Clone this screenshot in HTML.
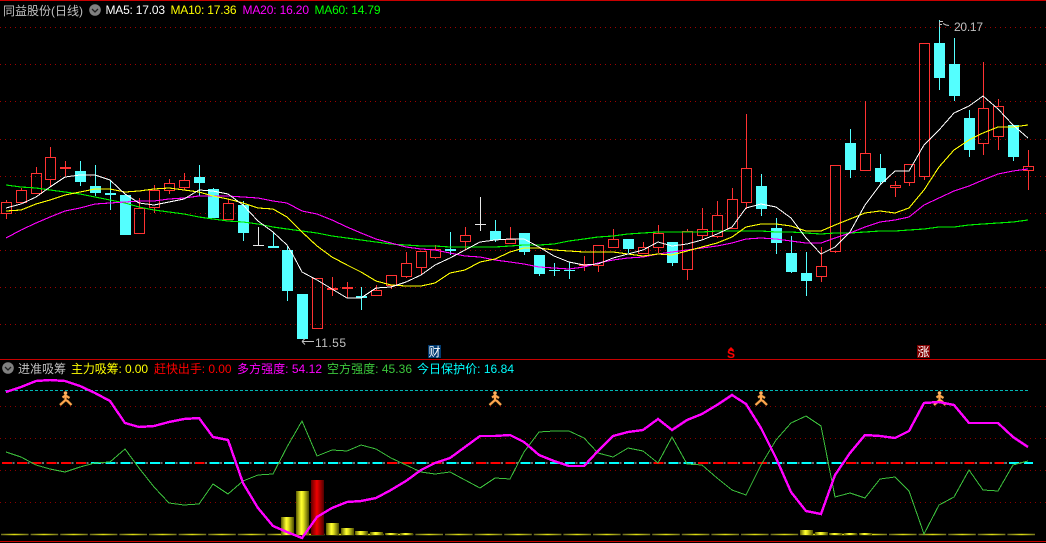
<!DOCTYPE html>
<html lang="zh"><head><meta charset="utf-8"><title>同益股份</title>
<style>
html,body{margin:0;padding:0;background:#000;width:1046px;height:543px;overflow:hidden}
svg{display:block}
text{font-family:"Liberation Sans","WenQuanYi Zen Hei","Noto Sans CJK SC",sans-serif;font-size:12px}
</style></head><body>
<svg width="1046" height="543" viewBox="0 0 1046 543" xmlns="http://www.w3.org/2000/svg">
<defs>
<linearGradient id="g" x1="0" x2="1" y1="0" y2="0"><stop offset="0" stop-color="#5a5a00"/><stop offset=".4" stop-color="#ffff30"/><stop offset=".55" stop-color="#e8e820"/><stop offset="1" stop-color="#4a4a00"/></linearGradient>
<linearGradient id="r" x1="0" x2="1" y1="0" y2="0"><stop offset="0" stop-color="#600000"/><stop offset=".45" stop-color="#f00000"/><stop offset="1" stop-color="#500000"/></linearGradient>
<linearGradient id="y" gradientUnits="userSpaceOnUse" x1="1" x2="30.62" y1="0" y2="0" spreadMethod="repeat"><stop offset="0" stop-color="#6a6a20"/><stop offset=".45" stop-color="#dcdc10"/><stop offset=".95" stop-color="#6a6a20"/><stop offset="1" stop-color="#6a6a20"/></linearGradient>
<clipPath id="rc"><rect x="0" y="460" width="87" height="8"/><rect x="195" y="460" width="10" height="8"/><rect x="386" y="460" width="27" height="8"/><rect x="431" y="460" width="12" height="8"/><rect x="475" y="460" width="42" height="8"/><rect x="653" y="460" width="11" height="8"/><rect x="696" y="460" width="71" height="8"/><rect x="845" y="460" width="159" height="8"/></clipPath>
<g id="run"><path d="M0-4 0 1-5.5 6M0 1 2 2 6 6M-3-1.5 0-3.5 4-1" fill="none" stroke="#7a4a10" stroke-width="3" stroke-opacity=".7"/><path d="M0-4 0 1-5.5 6M0 1 2 2 6 6M-3-1.5 0-3.5 4-1" fill="none" stroke="#ffa850" stroke-width="2"/><circle cx="0" cy="-6" r="1.8" fill="#ffb060"/></g>
</defs>
<rect width="1046" height="543" fill="#000"/>
<g shape-rendering="crispEdges" fill="none">
<path d="M0 .5H1046M0 359.5H1046M0 541.5H1046" stroke="#c80000"/>
<path d="M0 27.5H1046M0 64.5H1046M0 101.5H1046M0 139.5H1046M0 176.5H1046M0 213.5H1046M0 250.5H1046M0 287.5H1046M0 324.5H1046" stroke="#a00000" stroke-dasharray="1 4"/>
<path d="M0 406.5H1046M0 438.5H1046M0 470.5H1046M0 502.5H1046" stroke="#8a0000" stroke-dasharray="1 4"/>
<path d="M5 390.5H1028" stroke="#00b8b8" stroke-dasharray="3 2"/>

<path stroke="#ff3232" d="M6.5 200V202M6.5 213V219M1.5 202.5h10V213.5h-10z
M21.5 188V190M16.5 190.5h10V202.5h-10z
M36.5 167V173M31.5 173.5h10V193.5h-10z
M50.5 147V157M50.5 179V186M45.5 157.5h10V179.5h-10z
M139.5 198V208M134.5 208.5h10V233.5h-10z
M154.5 185V190M154.5 207V213M149.5 190.5h10V207.5h-10z
M169.5 179V183M169.5 190V194M164.5 183.5h10V190.5h-10z
M184.5 173V180M184.5 187V190M179.5 180.5h10V187.5h-10z
M228.5 199V203M223.5 203.5h10V219.5h-10z
M312.5 278.5h10V328.5h-10z
M376.5 285V290M371.5 290.5h10V295.5h-10z
M391.5 285V289M386.5 275.5h10V285.5h-10z
M406.5 252V263M406.5 276V278M401.5 263.5h10V276.5h-10z
M421.5 267V274M416.5 251.5h10V267.5h-10z
M435.5 245V249M435.5 257V259M430.5 249.5h10V257.5h-10z
M465.5 227V235M465.5 241V250M460.5 235.5h10V241.5h-10z
M510.5 227V239M505.5 239.5h10V243.5h-10z
M598.5 265V272M593.5 245.5h10V265.5h-10z
M613.5 229V239M608.5 239.5h10V247.5h-10z
M643.5 242V247M638.5 247.5h10V253.5h-10z
M658.5 225V233M658.5 247V253M653.5 233.5h10V247.5h-10z
M687.5 229V231M687.5 269V280M682.5 231.5h10V269.5h-10z
M702.5 208V229M702.5 235V240M697.5 229.5h10V235.5h-10z
M717.5 201V215M717.5 236V238M712.5 215.5h10V236.5h-10z
M732.5 188V199M727.5 199.5h10V228.5h-10z
M746.5 114V168M746.5 202V209M741.5 168.5h10V202.5h-10z
M821.5 247V266M821.5 276V282M816.5 266.5h10V276.5h-10z
M835.5 251V253M830.5 165.5h10V251.5h-10z
M865.5 101V153M860.5 153.5h10V170.5h-10z
M895.5 181V185M895.5 187V197M890.5 185.5h10V187.5h-10z
M909.5 182V186M904.5 164.5h10V182.5h-10z
M924.5 176V180M919.5 43.5h10V176.5h-10z
M983.5 62V108M983.5 143V155M978.5 108.5h10V143.5h-10z
M998.5 99V106M998.5 136V150M993.5 106.5h10V136.5h-10z
M1028.5 150V166M1028.5 170V190M1023.5 166.5h10V170.5h-10z
M65.5 161V176M332.5 277V296M347.5 282V298M584.5 256V271"/>
<path stroke="#ff3232" stroke-width="2" d="M60 168H71M327 289H338M342 288H353M579 265H590"/>

<path stroke="#54ffff" d="M80.5 161V186M95.5 165V196M110.5 180V210M199.5 165V196M213.5 188V189M243.5 201V241M273.5 233V248M287.5 246V301M361.5 287V310M450.5 232V255M495.5 220V242M524.5 233V255M539.5 255V276M554.5 263V276M569.5 262V279M628.5 239V253M672.5 242V266M761.5 174V216M776.5 218V254M791.5 236V273M806.5 252V296M850.5 129V178M880.5 154V184M939.5 20V90M954.5 38V101M969.5 110V157M1013.5 125V161M549 270.5H560M564 270.5H575"/>
<path stroke="#54ffff" stroke-width="2" d="M105 194H116M268 247H279M356 297H367M445 250H456"/>
<path fill="#54ffff" d="M75 171h11V182H75zM90 186h11V193H90zM120 195h11V235H120zM194 177h11V183H194zM208 189h11V218H208zM238 205h11V233H238zM282 250h11V291H282zM297 294h11V339H297zM490 231h11V240H490zM519 233h11V252H519zM534 255h11V274H534zM623 239h11V249H623zM667 242h11V263H667zM756 186h11V209H756zM771 228h11V243H771zM786 253h11V272H786zM801 273h11V281H801zM845 143h11V170H845zM875 168h11V182H875zM934 43h11V78H934zM949 64h11V96H949zM964 118h11V150H964zM1008 125h11V157H1008z"/>
<path stroke="#e8e8e8" d="M258.5 227V246M253 245.5H264M480.5 197V231M475 224.5H486"/>

<polyline stroke="#00f000" stroke-width="1.15" points="6,185 21,187 36,188 50,190 65,192 80,194 95,197 110,200 125,203 139,207 154,210 169,212 184,214 199,217 213,219 228,221 243,222 258,224 273,227 287,229 302,231 317,233 332,236 347,238 361,240 376,242 391,244 406,245 421,246 435,246 450,247 465,247 480,247 495,247 510,246 524,245 539,245 554,244 569,241 584,239 598,237 613,236 628,234 643,233 658,232 672,232 687,232 702,232 717,231 732,231 746,231 761,231 776,232 791,232 806,233 821,234 835,233 850,233 865,232 880,231 895,231 909,230 924,229 939,227 954,227 969,225 983,224 998,223 1013,222 1028,220"/>
<polyline stroke="#ff00ff" stroke-width="1.1" points="6,238 21,230 36,223 50,217 65,211 80,208 95,204 110,203 125,202 139,201 154,201 169,199 184,198 199,196 213,196 228,196 243,197 258,198 273,201 287,203 302,211 317,214 332,220 347,227 361,233 376,239 391,243 406,247 421,249 435,250 450,253 465,256 480,257 495,260 510,262 524,264 539,267 554,268 569,269 584,267 598,263 613,260 628,258 643,257 658,254 672,252 687,250 702,248 717,246 732,243 746,239 761,238 776,239 791,241 806,243 821,243 835,238 850,233 865,227 880,222 895,220 909,217 924,205 939,198 954,191 969,186 983,180 998,174 1013,171 1028,169"/>
<polyline stroke="#ffff00" stroke-width="1.1" points="6,211 21,210 36,204 50,200 65,195 80,192 95,189 110,189 125,192 139,191 154,189 169,188 184,190 199,192 213,196 228,199 243,203 258,208 273,209 287,217 302,232 317,246 332,257 347,265 361,272 376,281 391,285 406,286 421,286 435,283 450,273 465,270 480,262 495,259 510,252 524,248 539,248 554,250 569,251 584,252 598,252 613,252 628,254 643,256 658,254 672,255 687,251 702,247 717,243 732,237 746,227 761,224 776,224 791,226 806,231 821,231 835,225 850,219 865,213 880,211 895,213 909,208 924,190 939,167 954,150 969,140 983,133 998,127 1013,127 1028,125"/>
<polyline stroke="#ffffff" stroke-width="1" points="6,208 21,204 36,197 50,187 65,177 80,175 95,175 110,180 125,194 139,203 154,205 169,202 184,199 199,190 213,191 228,194 243,205 258,221 273,232 287,245 293,255 302,272 317,280 332,289 347,298 361,298 376,288 391,287 406,282 421,275 435,265 450,258 465,250 480,242 495,240 510,239 524,239 539,247 554,256 569,262 584,265 598,264 613,258 628,254 643,250 658,242 672,246 687,244 702,240 717,234 732,227 746,208 761,204 776,207 791,218 806,238 821,254 835,247 850,232 865,205 880,185 895,171 909,171 924,145 939,130 954,113 969,106 983,96 998,109 1013,125 1028,138"/>

<path d="M12.5 463H1033" stroke="#707070" stroke-width="2" stroke-dasharray="2 12.81"/>
<path d="M2 463H1033" stroke="#00ffff" stroke-width="2" stroke-dasharray="10 4.81"/>
<path d="M2 463H1033" stroke="#ff0000" stroke-width="2" stroke-dasharray="10 4.81" clip-path="url(#rc)"/>
</g>
<path d="M1 534.5H1035" stroke="url(#y)" stroke-width="1.4" stroke-dasharray="27.6 2" fill="none"/>
<g shape-rendering="crispEdges">
<rect x="281" y="517" width="13" height="18" fill="url(#g)"/>
<rect x="296" y="491" width="13" height="44" fill="url(#g)"/>
<rect x="311" y="480" width="13" height="55" fill="url(#r)"/>
<rect x="326" y="523" width="13" height="12" fill="url(#g)"/>
<rect x="341" y="528" width="13" height="7" fill="url(#g)"/>
<rect x="355" y="531" width="13" height="4" fill="url(#g)"/>
<rect x="370" y="532" width="13" height="3" fill="url(#g)"/>
<rect x="385" y="533" width="13" height="2" fill="url(#g)"/>
<rect x="400" y="533" width="13" height="2" fill="url(#g)"/>
<rect x="800" y="530" width="13" height="5" fill="url(#g)"/>
<rect x="815" y="532" width="13" height="3" fill="url(#g)"/>
<rect x="829" y="533" width="13" height="2" fill="url(#g)"/>
<rect x="844" y="533" width="13" height="2" fill="url(#g)"/>
<rect x="859" y="533" width="13" height="2" fill="url(#g)"/>
</g>
<use href="#run" x="65.5" y="399"/><use href="#run" x="495" y="399"/><use href="#run" x="761" y="399"/><use href="#run" x="939.5" y="399"/>
<g fill="none" shape-rendering="crispEdges">
<polyline stroke="#3cc03c" stroke-width="1" points="6,452 21,457 36,465 50,469 65,472 80,467 95,463 110,462 125,449 139,468 154,487 169,503 184,505 199,504 213,484 228,494 243,481 258,475 273,474 287,447 302,421 317,456 332,450 347,451 361,445 376,449 391,458 406,465 421,472 435,474 450,472 465,480 480,488 495,478 510,479 524,452 539,432 554,431 569,431 584,438 598,453 613,457 628,448 643,451 658,463 672,437 687,464 702,465 717,478 732,490 746,495 761,465 776,440 791,423 806,416 821,426 835,497 850,493 865,498 880,479 895,477 909,491 924,534 939,505 954,497 969,470 983,490 998,491 1013,465 1028,461"/>
<polyline stroke="#ff00ff" stroke-width="2.4" points="6,392 21,387 36,381 50,380 65,381 80,386 95,393 110,401 125,423 139,427 154,426 169,422 184,419 199,418 213,437 228,440 243,483 258,508 273,526 287,532 302,538 317,517 332,508 347,502 361,501 376,498 391,490 406,481 421,470 435,463 450,458 465,447 480,436 495,436 510,435 524,442 539,455 554,461 569,466 584,466 598,451 613,436 628,432 643,430 658,419 672,430 687,420 702,414 717,405 732,395 746,404 761,428 776,458 791,492 806,511 821,514 835,475 850,453 865,435 880,436 895,438 909,431 924,403 939,402 954,405 969,423 983,423 998,423 1013,437 1028,447"/>
</g>
<g fill="none" stroke="#c0c0c0">
<path d="M302 341.5H314M302 341.5l3-3M302 341.5l3 3"/>
<path d="M939.5 22V27M939.5 21.5H943M939.5 24.5H942M943 23.5l3 1.5 3 .5"/>
</g>
<text x="315" y="347" fill="#c0c0c0" textLength="31">11.55</text>
<text x="954" y="31" fill="#c0c0c0" textLength="29">20.17</text>
<text x="3" y="15" fill="#c0c0c0" textLength="80">同益股份(日线)</text>
<circle cx="95" cy="10" r="5.8" fill="#808080"/><path d="M92 9l3 3 3-3" fill="none" stroke="#202020" stroke-width="1.3"/>
<text x="105.5" y="14" fill="#ffffff" textLength="59.5">MA5: 17.03</text>
<text x="170.5" y="14" fill="#ffff00" textLength="66">MA10: 17.36</text>
<text x="242.5" y="14" fill="#ff00ff" textLength="66.5">MA20: 16.20</text>
<text x="314.5" y="14" fill="#00ff00" textLength="66">MA60: 14.79</text>
<circle cx="8" cy="368" r="5.8" fill="#808080"/><path d="M5 367l3 3 3-3" fill="none" stroke="#202020" stroke-width="1.3"/>
<text x="18" y="373" fill="#c0c0c0" textLength="48">进准吸筹</text>
<text x="71" y="373" fill="#ffff00" textLength="77">主力吸筹: 0.00</text>
<text x="154" y="373" fill="#ff0000" textLength="77.5">赶快出手: 0.00</text>
<text x="237" y="373" fill="#ff00ff" textLength="85">多方强度: 54.12</text>
<text x="327" y="373" fill="#3cc83c" textLength="85">空方强度: 45.36</text>
<text x="417" y="373" fill="#00ffff" textLength="97">今日保护价: 16.84</text>
<rect x="428" y="345" width="13" height="13" fill="#003a70"/>
<text x="428.5" y="356" fill="#ffffff">财</text>
<path d="M731 347l3 3h-6z" fill="#ff0000"/>
<text x="727" y="358" fill="#ff0000" style="font-size:12px;font-weight:bold">S</text>
<rect x="917" y="345" width="13" height="13" fill="#800000"/>
<text x="917.5" y="356" fill="#ffffff">涨</text>
</svg>
</body></html>
